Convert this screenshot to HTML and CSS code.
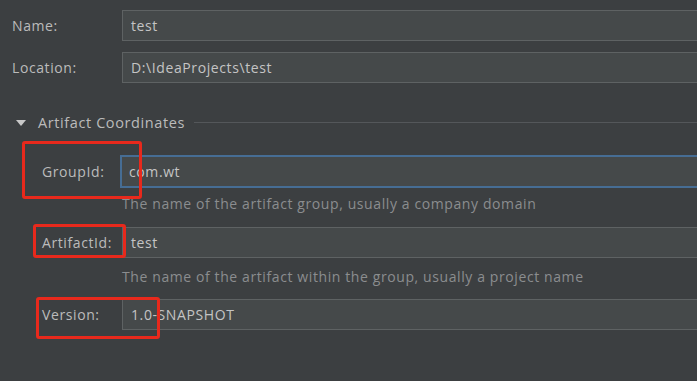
FILE: index.html
```html
<!DOCTYPE html>
<html lang="en">
<head>
	<meta charset="utf-8">
	<title>New Project</title>
	<link rel="stylesheet" href="styles.css">
</head>
<body>
	<div class="form">
		<div class="row">
			<label class="label">Name:</label>
			<div class="field">test</div>
		</div>
		<div class="row row-loc">
			<label class="label">Location:</label>
			<div class="field">D:\IdeaProjects\test</div>
		</div>

		<div class="section">
			<span class="caret"></span>
			<span class="section-title">Artifact Coordinates</span>
			<span class="rule"></span>
		</div>

		<div class="artifact">
			<div class="row row-group">
				<label class="label">GroupId:</label>
				<div class="field focus">com.wt</div>
				<span class="mark mark-group"></span>
			</div>
			<div class="hint">The name of the artifact group, usually a company domain</div>

			<div class="row row-art">
				<label class="label">ArtifactId:</label>
				<div class="field">test</div>
				<span class="mark mark-art"></span>
			</div>
			<div class="hint hint-art">The name of the artifact within the group, usually a project name</div>

			<div class="row row-ver">
				<label class="label">Version:</label>
				<div class="field">1.0-SNAPSHOT</div>
				<span class="mark mark-ver"></span>
			</div>
		</div>
	</div>
</body>
</html>
```

FILE: styles.css
```css
body {
	margin: 0;
	background: #3c3f41;
	color: #bbbbbb;
	font-family: "Open Sans", "Noto Sans", sans-serif;
	font-size: 14px;
	letter-spacing: 0.6px;
	overflow: hidden;
}
.form {
	padding: 10px 0 60px 12px;
}
.row {
	position: relative;
	display: flex;
	align-items: center;
}
.label {
	width: 110px;
	flex: none;
}
.field {
	flex: 1;
	height: 29px;
	line-height: 29px;
	padding-left: 8px;
	background: #45494a;
	border: 1px solid #5e6263;
	border-right: none;
	color: #c4c4c4;
}
.row-loc {
	margin-top: 11px;
}
.section {
	display: flex;
	align-items: center;
	margin-top: 29px;
	height: 20px;
}
.caret {
	width: 0;
	height: 0;
	margin: 1px 12px 0 4px;
	border-left: 5px solid transparent;
	border-right: 5px solid transparent;
	border-top: 6px solid #c8c8c8;
}
.section-title {
	font-size: 14.5px;
}
.rule {
	flex: 1;
	height: 1px;
	margin-left: 9px;
	background: #54575a;
}
.artifact {
	padding-left: 30px;
}
.artifact .label {
	width: 80px;
}
.row-group {
	margin-top: 23px;
}
.field.focus {
	margin-left: -2px;
	border: 2px solid #466d94;
	border-right: none;
	height: 29px;
	padding-left: 7px;
}
.hint {
	margin: 7px 0 0 80px;
	line-height: 18px;
	color: #8b8d8f;
}
.row-art {
	margin-top: 14px;
}
.hint-art {
	margin-top: 10px;
}
.row-ver {
	margin-top: 13px;
}
.mark {
	position: absolute;
	border: 3px solid #e8291c;
	border-radius: 3px;
	box-sizing: border-box;
}
.mark-group {
	left: -20px;
	top: -14px;
	width: 120px;
	height: 58px;
}
.mark-art {
	left: -9px;
	top: -3px;
	width: 93px;
	height: 34px;
}
.mark-ver {
	left: -6px;
	top: -2px;
	width: 124px;
	height: 42px;
}
```
